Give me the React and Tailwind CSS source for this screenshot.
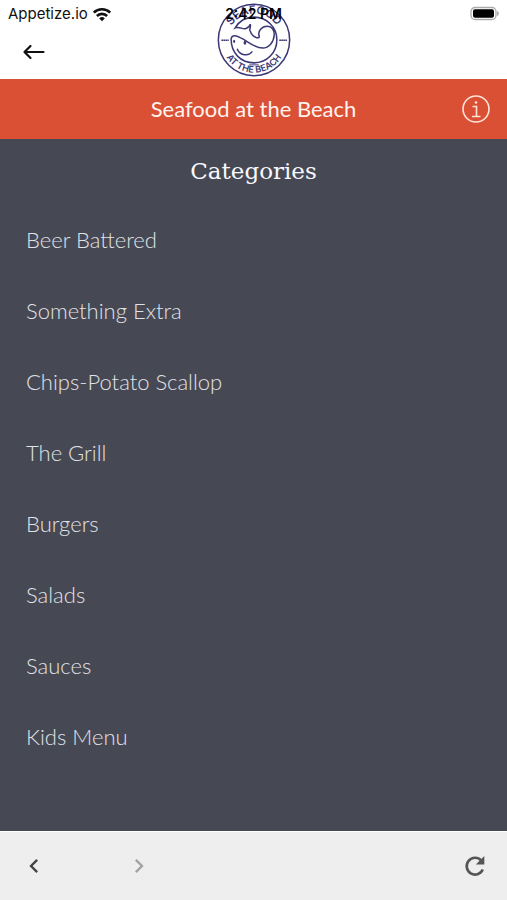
import { MdChevronLeft, MdChevronRight } from 'react-icons/md';

const categories = [
  'Beer Battered',
  'Something Extra',
  'Chips-Potato Scallop',
  'The Grill',
  'Burgers',
  'Salads',
  'Sauces',
  'Kids Menu',
];

function WifiIcon() {
  return (
    <svg viewBox="0 0 20 15" className="h-[15px] w-5" fill="none" stroke="#111" strokeWidth="2.6" aria-hidden="true">
      <path d="M1.8 5.6a11.6 11.6 0 0 1 16.4 0" />
      <path d="M4.9 9a7.2 7.2 0 0 1 10.2 0" />
      <path d="M10 14.2 7.2 11.4a4 4 0 0 1 5.6 0z" fill="#111" stroke="none" />
    </svg>
  );
}

function BatteryIcon() {
  return (
    <svg viewBox="0 0 32 16" className="h-4 w-8" aria-hidden="true">
      <rect x="4" y="1.5" width="25" height="12" rx="4" fill="#fff" stroke="#aaa" strokeWidth="1.3" />
      <rect x="6" y="3.3" width="21" height="8.4" rx="2" fill="#000" />
      <path d="M30.2 5v5c2-.8 2-4.2 0-5z" fill="#999" />
    </svg>
  );
}

function ArrowIcon() {
  return (
    <svg viewBox="0 0 24 24" className="size-6" fill="none" stroke="#111" strokeWidth="2.2" strokeLinecap="round" strokeLinejoin="round" aria-hidden="true">
      <path d="M21.5 12h-19M8.500 6 2.500 12l6 6" />
    </svg>
  );
}

function Logo() {
  return (
    <svg viewBox="28 10 220 220" className="size-[74px]" fill="none" stroke="#3b3875" strokeWidth="4.5" role="img" aria-label="Seafood at the Beach">
      <defs>
        <path id="ring-top" d="M59 120a79 79 0 0 1 158 0" />
        <path id="ring-bottom" d="M41 120a97 97 0 0 0 194 0" />
      </defs>
      <circle cx="138" cy="120" r="106" />
      {/* head outline and the hair wave that runs into the cap */}
      <path d="M70 118c0 42 30 70 68 70 39 0 68-31 68-69 0-37-30-67-68-67-24 0-44 12-56 32 12-6 22 6 32 2 7-3 12-7 13-13 2 8-3 13-1 19 4 11 10 19 20 21 6 2 9-1 7-6-4-13 8-28 24-28 14 0 22 12 21 27-1 20-16 38-34 38-26 0-46-22-67-31-9-5-18-8-24-3-3 3-3 6-3 8z" />
      <path d="M88 146c6 20 34 24 45 8" />
      <ellipse cx="79" cy="124" rx="3" ry="5" fill="#3b3875" stroke="none" />
      <ellipse cx="111" cy="128" rx="4" ry="6" fill="#3b3875" stroke="none" />
      <path d="M124 194h28" strokeWidth="3" />
      <path d="M41 121h22M213 121h23" strokeDasharray="5 1" />
      <g fill="#3b3875" stroke="none" fontFamily="Inter, sans-serif" fontWeight="600" textAnchor="middle">
        <text fontSize="33">
          <textPath href="#ring-top" startOffset="50%">SEAFOOD</textPath>
        </text>
        <text fontSize="27">
          <textPath href="#ring-bottom" startOffset="50%">AT THE BEACH</textPath>
        </text>
      </g>
    </svg>
  );
}

function InfoIcon() {
  return (
    <svg viewBox="0 0 30 30" className="size-[30px]" fill="none" stroke="#ffe3d8" strokeWidth="1.6" aria-hidden="true">
      <circle cx="15" cy="15" r="13" />
      <path d="M11.5 12.5h4V22M11 22.5h8.5" />
      <circle cx="15" cy="8.5" r="1.3" fill="#ffe3d8" stroke="none" />
    </svg>
  );
}

function ReloadIcon() {
  return (
    <svg viewBox="0 0 24 24" className="size-6" fill="none" stroke="#555" strokeWidth="2.6" aria-hidden="true">
      <path d="M19.8 15.500a8.400 8.400 0 1 1-1.500-9" />
      <path d="M21.300 2v8.500h-8.500z" fill="#555" stroke="none" />
    </svg>
  );
}

function Header() {
  return (
    <header className="relative bg-white pb-3 text-[#111]">
      <div className="flex h-7 items-center justify-between px-2 font-['Inter',sans-serif] text-[15px]">
        <div className="flex items-center gap-1">
          <span>Appetize.io</span>
          <WifiIcon />
        </div>
        <BatteryIcon />
      </div>
      <div className="flex h-[39px] items-center px-5 pt-2">
        <button type="button" aria-label="Back" className="p-0.5">
          <ArrowIcon />
        </button>
      </div>
      <div className="absolute inset-x-0 top-[3px] flex justify-center">
        <Logo />
      </div>
      <time className="absolute inset-x-0 top-1 text-center font-['Inter',sans-serif] text-sm font-semibold text-black">
        2:42 PM
      </time>
    </header>
  );
}

function TitleBar() {
  return (
    <div className="grid h-[60px] grid-cols-[1fr_auto_1fr] items-center bg-[#da5035] px-4">
      <h1 className="col-start-2 pb-0.5 text-[22px] text-[#fff3ee]">Seafood at the Beach</h1>
      <button type="button" aria-label="Information" className="justify-self-end">
        <InfoIcon />
      </button>
    </div>
  );
}

function Footer() {
  return (
    <footer className="flex h-[69px] items-center justify-between border-t border-white bg-[#eeeeee] px-5 text-[#444]">
      <div className="flex gap-[77px]">
        <button type="button" aria-label="Previous page">
          <MdChevronLeft className="size-7" />
        </button>
        <button type="button" aria-label="Next page" className="text-[#a2a2a2]">
          <MdChevronRight className="size-7" />
        </button>
      </div>
      <button type="button" aria-label="Reload">
        <ReloadIcon />
      </button>
    </footer>
  );
}

export default function App() {
  return (
    <div className="flex min-h-screen flex-col bg-[#464853] font-['Lato',sans-serif]">
      <Header />
      <TitleBar />
      <main className="flex-1">
        <h2 className="pt-4 pb-[17px] text-center font-['DejaVu_Serif',serif] text-[23px] leading-8 text-[#f7f8ff]">
          Categories
        </h2>
        <ul>
          {categories.map((name) => (
            <li key={name}>
              <a href="#" className="flex h-[71px] items-center px-[26px] text-[22px] font-light text-[#e0e2e7]">
                {name}
              </a>
            </li>
          ))}
        </ul>
      </main>
      <Footer />
    </div>
  );
}
